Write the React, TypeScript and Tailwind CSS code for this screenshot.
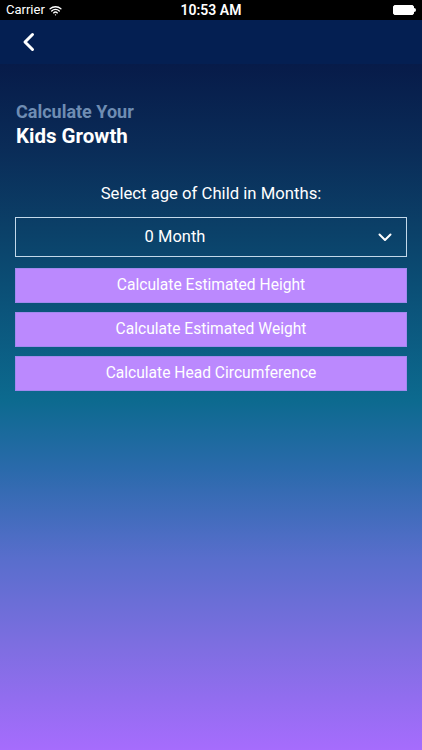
import { Wifi } from 'lucide-react'

const buttons = [
    'Calculate Estimated Height',
    'Calculate Estimated Weight',
    'Calculate Head Circumference',
]

function StatusBar() {
    return (
        <div className="flex h-5 items-center justify-between bg-black px-[6px] text-white">
            <div className="flex w-[100px] items-center gap-1 text-[13px]">
                <span>Carrier</span>
                <Wifi className="h-[13px] w-[13px]" strokeWidth={2.5} />
            </div>
            <span className="text-[14px] font-semibold">10:53 AM</span>
            <div className="flex w-[100px] items-center justify-end">
                <div className="h-[10px] w-[21px] rounded-[2px] border border-white bg-white" />
                <div className="h-[4px] w-[1.5px] rounded-r-sm bg-white" />
            </div>
        </div>
    )
}

export default function App() {
    return (
        <div className="flex h-[750px] w-[422px] flex-col overflow-hidden font-['Roboto',sans-serif]">
            <StatusBar />
            {/* nav bar */}
            <div className="flex h-[44px] items-center bg-[#041f52] px-[21px]">
                <svg width="16" height="20" viewBox="0 0 16 20" fill="none">
                    <path d="M11.5 2.5 L4 10 L11.5 17.5" stroke="white" strokeWidth="3" strokeLinecap="round" strokeLinejoin="round" />
                </svg>
            </div>

            <div className="flex-1 bg-[linear-gradient(180deg,#071b49_0%,#0a2c58_12.5%,#0b4068_24%,#0b5178_34%,#0c6a8f_49%,#2a6aab_59%,#586ecc_72%,#7e6ee1_85%,#a66cfd_100%)] px-[15px] pt-[37px]">
                <h2 className="pl-[1px] text-[18px] font-bold leading-[22px] text-[#6f8db3]">Calculate Your</h2>
                <h1 className="pl-[1px] text-[20.5px] font-bold leading-[26px] text-white">Kids Growth</h1>

                <p className="mt-[35px] text-center text-[16.7px] leading-[20px] text-white">
                    Select age of Child in Months:
                </p>

                <div className="mt-[13px] flex h-[40px] items-center border border-[#c3d9ea] pr-[14px]">
                    <span className="flex-1 pr-[44px] text-center text-[16.5px] text-white">0 Month</span>
                    <svg width="14" height="9" viewBox="0 0 14 9" fill="none">
                        <path d="M1.5 1.5 L7 7 L12.5 1.5" stroke="white" strokeWidth="2" strokeLinecap="round" strokeLinejoin="round" />
                    </svg>
                </div>

                <div className="mt-[11px] flex flex-col gap-[9px]">
                    {buttons.map(label => (
                        <button
                            key={label}
                            className="h-[35px] w-full border border-[#7a86d8]/40 bg-[#bb89fe] text-center text-[15.6px] text-white"
                        >
                            {label}
                        </button>
                    ))}
                </div>
            </div>
        </div>
    )
}
